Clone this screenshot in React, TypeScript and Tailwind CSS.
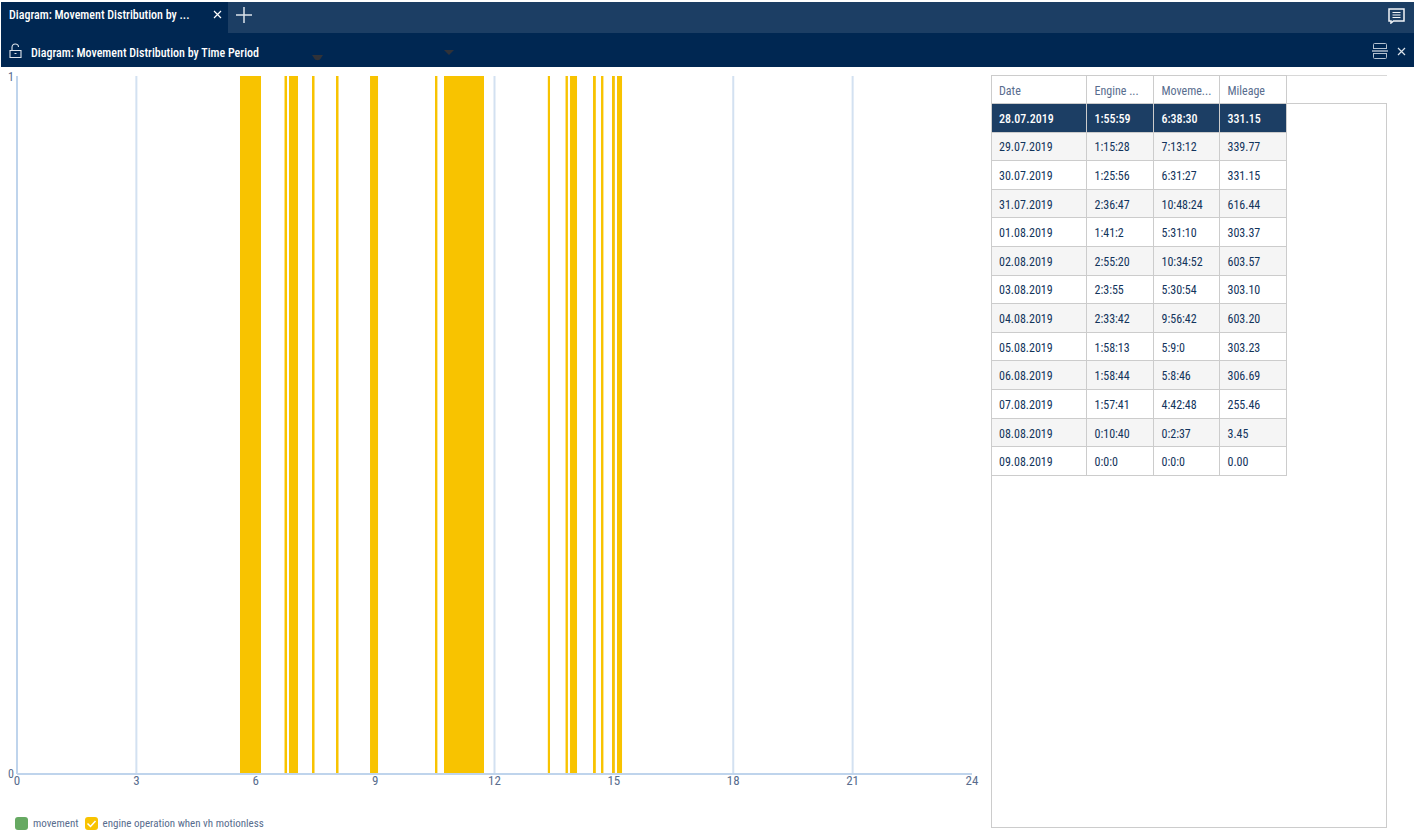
import { useState } from "react";

type Interval = { start: number; length: number };

const engineIntervals: Interval[] = [
  { start: 5.604, length: 0.528 },
  { start: 6.723, length: 0.063 },
  { start: 6.836, length: 0.226 },
  { start: 7.414, length: 0.063 },
  { start: 8.017, length: 0.063 },
  { start: 8.872, length: 0.201 },
  { start: 10.505, length: 0.06 },
  { start: 10.731, length: 1.005 },
  { start: 13.34, length: 0.055 },
  { start: 13.785, length: 0.06 },
  { start: 13.898, length: 0.176 },
  { start: 14.476, length: 0.07 },
  { start: 14.677, length: 0.06 },
  { start: 14.953, length: 0.07 },
  { start: 15.079, length: 0.126 },
];

const hours = [0, 3, 6, 9, 12, 15, 18, 21, 24];

const rows = [
  ["28.07.2019", "1:55:59", "6:38:30", "331.15"],
  ["29.07.2019", "1:15:28", "7:13:12", "339.77"],
  ["30.07.2019", "1:25:56", "6:31:27", "331.15"],
  ["31.07.2019", "2:36:47", "10:48:24", "616.44"],
  ["01.08.2019", "1:41:2", "5:31:10", "303.37"],
  ["02.08.2019", "2:55:20", "10:34:52", "603.57"],
  ["03.08.2019", "2:3:55", "5:30:54", "303.10"],
  ["04.08.2019", "2:33:42", "9:56:42", "603.20"],
  ["05.08.2019", "1:58:13", "5:9:0", "303.23"],
  ["06.08.2019", "1:58:44", "5:8:46", "306.69"],
  ["07.08.2019", "1:57:41", "4:42:48", "255.46"],
  ["08.08.2019", "0:10:40", "0:2:37", "3.45"],
  ["09.08.2019", "0:0:0", "0:0:0", "0.00"],
];

const toPercent = (hour: number) => `${(hour / 24) * 100}%`;

const CloseIcon = () => (
  <svg width="9" height="9" viewBox="0 0 9 9" fill="none" stroke="currentColor" strokeWidth="1.2">
    <path d="M1 1l7 7M8 1l-7 7" />
  </svg>
);

const TabBar = () => (
  <div className="flex h-[31px] bg-[#1c3e64] text-white">
    <div className="flex w-[227px] items-center justify-between bg-[#002752] pl-2 pr-[6px]">
      <span className="pb-[5px] text-[12px] leading-4 font-medium">Diagram: Movement Distribution by ...</span>
      <button type="button" aria-label="Close tab" className="pb-[6px]">
        <CloseIcon />
      </button>
    </div>
    <button type="button" aria-label="New tab" className="ml-2 pb-[5px]">
      <svg width="16" height="16" viewBox="0 0 16 16" fill="none" stroke="#dce3ea" strokeWidth="1.5">
        <path d="M8 0v16M0 8h16" />
      </svg>
    </button>
    <button type="button" aria-label="Messages" className="ml-auto mr-[9px] pb-[3px]">
      <svg width="17" height="16" viewBox="0 0 17 16" fill="none" stroke="#f2f5f8">
        <path strokeWidth="1.5" d="M1 1h15v12H5.500L3 15v-2H1z" />
        <path strokeWidth="1" d="M4.500 4.500h8M4.500 7h8M4.500 9.500h8" />
      </svg>
    </button>
  </div>
);

const DiagramHeader = () => (
  <header className="flex h-[34px] items-center bg-[#002752] pl-2 text-white">
    <button type="button" aria-label="Unlock" className="pt-[2px]">
      <svg width="13" height="16" viewBox="0 0 13 16" fill="none" stroke="#dce3ea" strokeWidth="1.1">
        <path d="M1 7.500h11v7H1zM3 7.500V4.500C3 2.500 4 1 6.200 1S9.500 2.300 9.500 4M5.500 10.500h2" />
      </svg>
    </button>
    <h1 className="ml-[9px] w-[233px] pt-[5px] text-[12px] leading-4 font-medium whitespace-nowrap">
      Diagram: Movement Distribution by Time Period
    </h1>
    <svg className="ml-[48px] mt-[16px]" width="11" height="6" viewBox="0 0 11 6" fill="#303238">
      <path d="M0 0h11L8 4.500Q5.500 6 3 4.500z" />
    </svg>
    <svg className="ml-[121px] mt-[5px]" width="10" height="5" viewBox="0 0 10 5" fill="#303238">
      <path d="M0 0h10L5 5z" />
    </svg>
    <div className="ml-auto flex items-center pt-[2px] pr-2">
      <button type="button" aria-label="Split view">
        <svg width="16" height="16" viewBox="0 0 16 16" fill="none" stroke="#b4c1cf">
          <path d="M1.500 6V1.500Q1.500.500 2.500.500h11q1 0 1 1V6M1.500 10v4.500q0 1 1 1h11q1 0 1-1V10M1.500 5.500h13M1.500 10.500h13" />
          <path stroke="#8195ac" strokeWidth="2" d="M0 8h16" />
        </svg>
      </button>
      <button type="button" aria-label="Close diagram" className="ml-[9px] text-[#dce3ea]">
        <CloseIcon />
      </button>
    </div>
  </header>
);

const TimeChart = ({ showEngine }: { showEngine: boolean }) => (
  <svg className="min-h-[300px] w-full flex-1 overflow-visible" fill="#586d8e">
    {hours.slice(1, -1).map((hour) => (
      <line key={hour} x1={toPercent(hour)} x2={toPercent(hour)} y1="0" y2="100%" stroke="#d3e1f1" strokeWidth="2" />
    ))}
    {showEngine &&
      engineIntervals.map(({ start, length }) => (
        <rect key={start} x={toPercent(start)} y="0" width={toPercent(length)} height="100%" fill="#f8c300" />
      ))}
    <line x1="0" x2="0" y1="0" y2="100%" stroke="#bfd4ec" strokeWidth="2" />
    <line x1="0" x2="100%" y1="100%" y2="100%" stroke="#bfd4ec" strokeWidth="2" />
    {hours.map((hour) => (
      <text key={hour} x={toPercent(hour)} y="100%" dy="11" textAnchor="middle" fontSize="13">
        {hour}
      </text>
    ))}
    <text x="-3" y="5" textAnchor="end" fontSize="12">1</text>
    <text x="-3" y="100%" dy="4" textAnchor="end" fontSize="12">0</text>
  </svg>
);

const DayTable = () => (
  <div className="flex w-[396px] shrink-0 items-stretch border-b border-l border-[#cccccc]">
    <table className="h-[401px] w-[294px] table-fixed border-collapse text-left text-[12px] leading-4 text-[#12345c]">
      <colgroup>
        <col className="w-[94px]" />
        <col className="w-[67px]" />
        <col className="w-[66px]" />
        <col className="w-[67px]" />
      </colgroup>
      <thead>
        <tr className="h-[28px] text-[#586d8e]">
          {["Date", "Engine ...", "Moveme...", "Mileage"].map((title) => (
            <th
              key={title}
              className="border-y border-r border-[#cccccc] pt-[2px] pl-2 font-normal whitespace-nowrap first:pl-[7px]"
            >
              {title}
            </th>
          ))}
        </tr>
      </thead>
      <tbody>
        {rows.map((row, index) => (
          <tr key={row[0]} className={index === 0 ? "bg-[#1c3e64] font-medium text-white" : "even:bg-[#f5f5f5]"}>
            {row.map((cell, column) => (
              <td key={column} className="border-r border-b border-[#cccccc] pt-[2px] pl-2 first:pl-[7px]">
                {cell}
              </td>
            ))}
          </tr>
        ))}
      </tbody>
    </table>
    <div className="flex flex-1 flex-col border-t border-[#d8d8d8]">
      <div className="h-[27px]" />
      <div className="flex-1 border-t border-r border-[#cccccc]" />
    </div>
  </div>
);

const App = () => {
  const [movement, setMovement] = useState(false);
  const [engine, setEngine] = useState(true);

  return (
    <div className="flex min-h-screen flex-col bg-white pt-[2px] pl-px font-['Roboto_Condensed','Liberation_Sans_Narrow',Roboto,sans-serif]">
      <TabBar />
      <DiagramHeader />
      <main className="flex flex-1 pr-[27px]">
        <section className="flex flex-1 flex-col pt-[9px] pb-1">
          <div className="flex flex-1 flex-col pr-[19px] pl-4">
            <TimeChart showEngine={engine} />
          </div>
          {/* Legend */}
          <div className="mt-[41px] flex h-4 items-center pl-[14px] text-[11px] leading-4 text-[#586d8e]">
            <label className="flex items-center gap-[5px]">
              <input
                type="checkbox"
                checked={movement}
                onChange={(e) => setMovement(e.target.checked)}
                className="size-[13px] appearance-none rounded-[3px] bg-[#66a962]"
              />
              <span className="pt-px">movement</span>
            </label>
            <label className="relative ml-[6px] flex items-center gap-[5px]">
              <input
                type="checkbox"
                checked={engine}
                onChange={(e) => setEngine(e.target.checked)}
                className="peer size-[13px] appearance-none rounded-[3px] bg-[#f8c300]"
              />
              <svg
                className="pointer-events-none invisible absolute left-0 peer-checked:visible"
                width="13"
                height="13"
                viewBox="0 0 13 13"
                fill="none"
                stroke="#fff"
                strokeWidth="1.500"
              >
                <path d="M2.500 6.500l3 3 5-5.500" />
              </svg>
              <span className="pt-px">engine operation when vh motionless</span>
            </label>
          </div>
        </section>
        <aside className="flex pt-2 pb-[7px]">
          <DayTable />
        </aside>
      </main>
    </div>
  );
};

export default App;
